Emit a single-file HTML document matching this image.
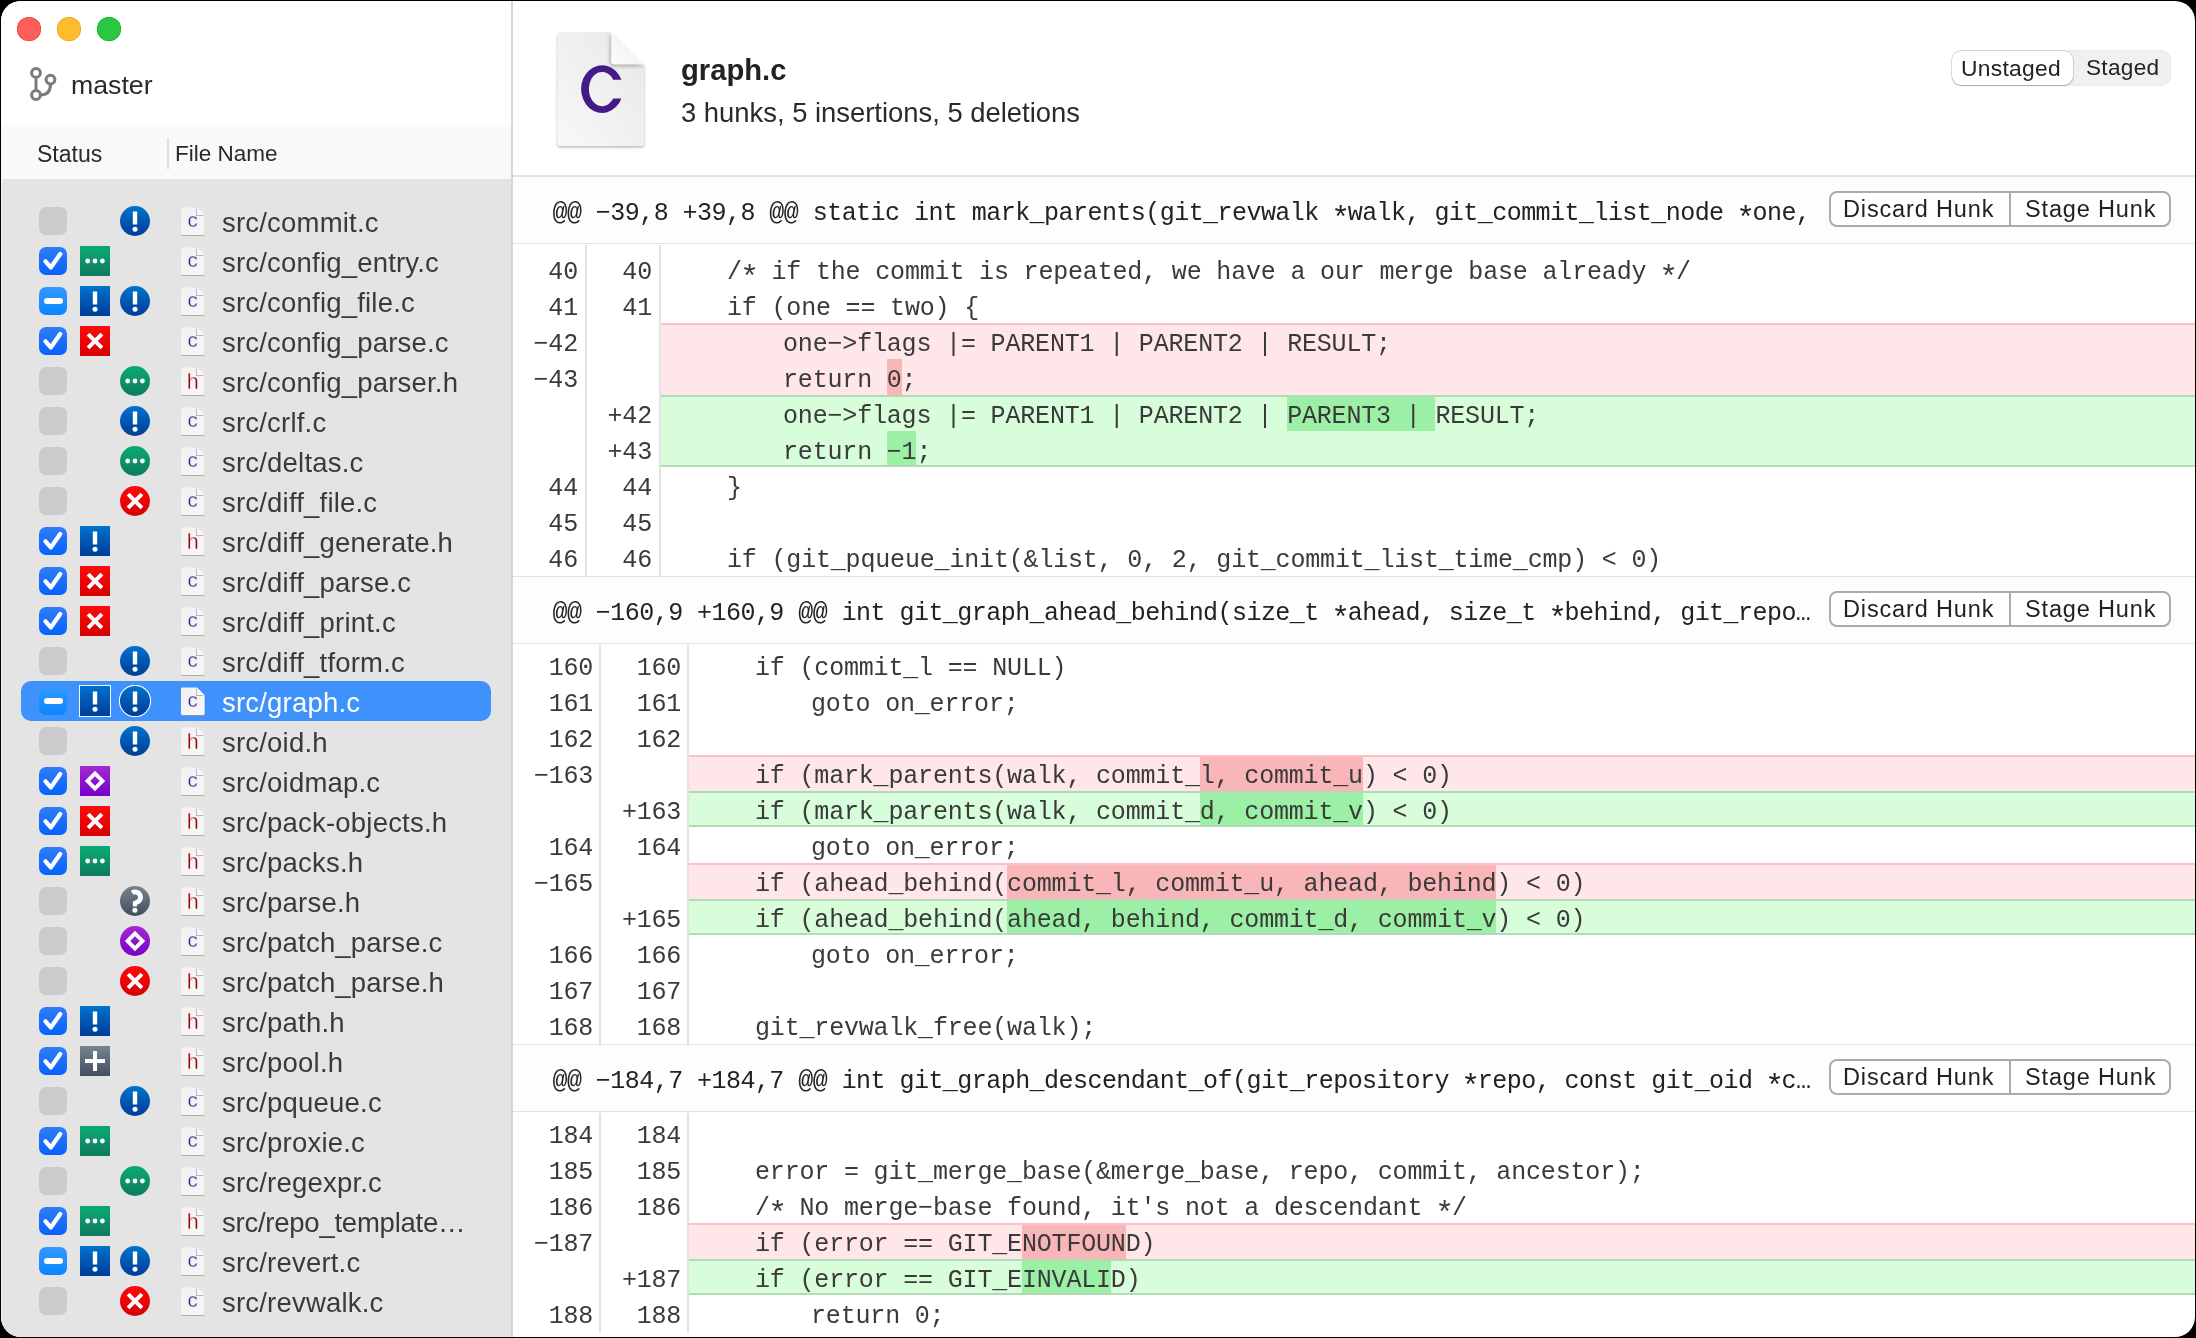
<!DOCTYPE html><html><head><meta charset="utf-8"><style>
*{box-sizing:border-box;margin:0;padding:0}
html,body{width:2196px;height:1338px;overflow:hidden;background:#000}
#win{position:absolute;left:1px;top:1px;width:2194px;height:1336px;border-radius:20px;overflow:hidden;background:#fff}
#c{position:absolute;left:-1px;top:-1px;width:2196px;height:1338px;-webkit-font-smoothing:antialiased;will-change:transform}
.a{position:absolute}
.sans{font-family:'Liberation Sans',sans-serif}
.mono{font-family:'Liberation Mono',monospace;font-size:25px;letter-spacing:-0.175px;white-space:pre;color:#3a3a3a}
.hmono{letter-spacing:-0.545px}
.ast{display:inline-block;transform:translateY(6.6px) scale(1.25)}
.tl{position:absolute;width:24px;height:24px;border-radius:50%}
.fn{position:absolute;left:222px;font-size:27.5px;letter-spacing:0.2px;color:#3a3a3a;line-height:40px;white-space:pre}
.cb{position:absolute;left:39px;width:28px;height:28px;border-radius:7px}
.cb0{background:#cbcbcb}
.cb1{background:linear-gradient(#2f7cf7,#0862fd)}
.cb2{background:linear-gradient(#3499ff,#0a84ff)}
.ic{position:absolute;width:30px;height:30px}
.fi{position:absolute;left:180px;width:26px;height:31px}
.ln{position:absolute;text-align:right;line-height:36px}
.code{position:absolute;line-height:36px}
.hl{position:absolute}
.rowdel{position:absolute;background:#ffe6e8}
.rowadd{position:absolute;background:#d8fdda}
.hh{position:absolute;left:513px;width:1683px;height:68px;background:#fdfdfd;border-top:1.5px solid #e2e2e2;border-bottom:1.5px solid #e2e2e2}
.btng{position:absolute;left:1829px;width:342px;height:36px;border:2px solid #ababab;border-radius:8px;background:#fff}
.btnt{position:absolute;font-size:23.5px;letter-spacing:0.85px;color:#222;line-height:31px;white-space:pre}
</style></head><body><div id="win"><div id="c"><svg width="0" height="0" style="position:absolute"><defs>
<filter id="blur05" x="-20%" y="-20%" width="140%" height="140%"><feGaussianBlur stdDeviation="0.6"/></filter>
<filter id="blur1" x="-20%" y="-20%" width="140%" height="140%"><feGaussianBlur stdDeviation="1.2"/></filter>
<linearGradient id="fpg" x1="0" y1="0" x2="1" y2="1"><stop offset="0" stop-color="#f1f1f1"/><stop offset="1" stop-color="#f7f7f7"/></linearGradient>
<linearGradient id="fdg" x1="0" y1="1" x2="1" y2="0"><stop offset="0" stop-color="#f4f4f4"/><stop offset="1" stop-color="#ffffff"/></linearGradient>
</defs></svg>
<div class="a" style="left:0;top:0;width:512px;height:125px;background:#fff"></div>
<div class="a" style="left:0;top:125px;width:512px;height:54px;background:#f9f9f9"></div>
<div class="a" style="left:0;top:179px;width:512px;height:1160px;background:#e4e4e4"></div>
<div class="a" style="left:1px;top:179px;width:1px;height:1160px;background:#f7f7f7"></div>
<div class="a" style="left:511px;top:0;width:2px;height:1338px;background:#d6d6d6"></div>
<div class="tl" style="left:17px;top:17px;background:#ff5f57;box-shadow:inset 0 0 0 0.8px #e2463f"></div>
<div class="tl" style="left:57px;top:17px;background:#febc2e;box-shadow:inset 0 0 0 0.8px #e1a325"></div>
<div class="tl" style="left:97px;top:17px;background:#28c840;box-shadow:inset 0 0 0 0.8px #1fad32"></div>
<svg class="a" style="left:24px;top:60px" width="40" height="48" viewBox="0 0 40 48">
<g fill="none" stroke="#7b7b7b" stroke-width="3">
<circle cx="12" cy="12.9" r="4.4"/><circle cx="12" cy="35" r="4.4"/><circle cx="26.5" cy="19.6" r="4.4"/>
<line x1="12" y1="17.3" x2="12" y2="30.6"/>
<path d="M26.5 24 C26.5 31 23.5 35 16.4 35"/>
</g></svg>
<div class="a sans" style="left:71px;top:65px;font-size:26.7px;color:#2a2a2a;line-height:40px">master</div>
<div class="a sans" style="left:37px;top:134px;font-size:23px;color:#2a2a2a;line-height:40px">Status</div>
<div class="a" style="left:167px;top:138px;width:1.5px;height:31px;background:#dcdcdc"></div>
<div class="a sans" style="left:175px;top:134px;font-size:22.5px;color:#2a2a2a;line-height:40px">File Name</div>
<div class="cb cb0" style="top:207px">
</div>
<svg class="ic" style="left:120px;top:206px" width="30" height="30" viewBox="0 0 30 30"><defs><linearGradient id="g120_206" x1="0" y1="0" x2="0" y2="1"><stop offset="0" stop-color="#0073cc"/><stop offset="1" stop-color="#003c99"/></linearGradient></defs><circle cx="15" cy="15" r="15" fill="url(#g120_206)"/><rect x="12.8" y="5.5" width="4.4" height="13" fill="#fff"/><circle cx="15" cy="23.3" r="2.5" fill="#fff"/></svg>
<svg class="fi" style="top:206px" width="26" height="31" viewBox="-1 -1 26 31"><path d="M0.6 0.5 H15.8 L23.6 8.3 V26.6 Q23.6 28 22.2 28 H1.4 Q0 28 0 26.6 V1.1 Q0 0.5 0.6 0.5Z" fill="#9a9a9a" transform="translate(0,0.9)" filter="url(#blur05)" opacity="0.75"/>
<path d="M0.6 0.5 H15.8 L23.6 8.3 V26.6 Q23.6 28 22.2 28 H1.4 Q0 28 0 26.6 V1.1 Q0 0.5 0.6 0.5Z" fill="url(#fpg)"/>
<path d="M15.8 0.5 L15.8 7.6 Q15.8 8.3 16.5 8.3 L23.6 8.3Z" fill="#888" transform="translate(-0.6,0.6)" filter="url(#blur05)" opacity="0.8"/>
<path d="M15.8 0.5 L15.8 7.6 Q15.8 8.3 16.5 8.3 L23.6 8.3Z" fill="url(#fdg)"/><text x="11.6" y="20.3" text-anchor="middle" font-family="Liberation Sans" font-size="20.5" fill="#3a1589" stroke="#f3f3f3" stroke-width="0.35">c</text></svg>
<div class="fn sans" style="top:203px;color:#3a3a3a;">src/commit.c</div>
<div class="cb cb1" style="top:247px">
<svg width="28" height="28" viewBox="0 0 28 28" style="position:absolute;left:0;top:0"><path d="M6.5 14.3 L11.8 20.4 L21.2 7.1" fill="none" stroke="#fff" stroke-width="4.3" stroke-linecap="round" stroke-linejoin="round"/></svg>
</div>
<svg class="ic" style="left:80px;top:246px" width="30" height="30" viewBox="0 0 30 30"><defs><linearGradient id="g80_246" x1="0" y1="0" x2="0" y2="1"><stop offset="0" stop-color="#0aab72"/><stop offset="1" stop-color="#0e7a5f"/></linearGradient></defs><rect x="0" y="0" width="30" height="30" fill="url(#g80_246)"/><circle cx="7.7" cy="15" r="2.4" fill="#fff"/><circle cx="15" cy="15" r="2.4" fill="#fff"/><circle cx="22.4" cy="15" r="2.4" fill="#fff"/></svg>
<svg class="fi" style="top:246px" width="26" height="31" viewBox="-1 -1 26 31"><path d="M0.6 0.5 H15.8 L23.6 8.3 V26.6 Q23.6 28 22.2 28 H1.4 Q0 28 0 26.6 V1.1 Q0 0.5 0.6 0.5Z" fill="#9a9a9a" transform="translate(0,0.9)" filter="url(#blur05)" opacity="0.75"/>
<path d="M0.6 0.5 H15.8 L23.6 8.3 V26.6 Q23.6 28 22.2 28 H1.4 Q0 28 0 26.6 V1.1 Q0 0.5 0.6 0.5Z" fill="url(#fpg)"/>
<path d="M15.8 0.5 L15.8 7.6 Q15.8 8.3 16.5 8.3 L23.6 8.3Z" fill="#888" transform="translate(-0.6,0.6)" filter="url(#blur05)" opacity="0.8"/>
<path d="M15.8 0.5 L15.8 7.6 Q15.8 8.3 16.5 8.3 L23.6 8.3Z" fill="url(#fdg)"/><text x="11.6" y="20.3" text-anchor="middle" font-family="Liberation Sans" font-size="20.5" fill="#3a1589" stroke="#f3f3f3" stroke-width="0.35">c</text></svg>
<div class="fn sans" style="top:243px;color:#3a3a3a;">src/config_entry.c</div>
<div class="cb cb2" style="top:287px">
<div style="position:absolute;left:4.5px;top:11.3px;width:19px;height:5.4px;border-radius:3px;background:#fff"></div>
</div>
<svg class="ic" style="left:80px;top:286px" width="30" height="30" viewBox="0 0 30 30"><defs><linearGradient id="g80_286" x1="0" y1="0" x2="0" y2="1"><stop offset="0" stop-color="#0073cc"/><stop offset="1" stop-color="#003c99"/></linearGradient></defs><rect x="0" y="0" width="30" height="30" fill="url(#g80_286)"/><rect x="12.8" y="5.5" width="4.4" height="13" fill="#fff"/><circle cx="15" cy="23.3" r="2.5" fill="#fff"/></svg>
<svg class="ic" style="left:120px;top:286px" width="30" height="30" viewBox="0 0 30 30"><defs><linearGradient id="g120_286" x1="0" y1="0" x2="0" y2="1"><stop offset="0" stop-color="#0073cc"/><stop offset="1" stop-color="#003c99"/></linearGradient></defs><circle cx="15" cy="15" r="15" fill="url(#g120_286)"/><rect x="12.8" y="5.5" width="4.4" height="13" fill="#fff"/><circle cx="15" cy="23.3" r="2.5" fill="#fff"/></svg>
<svg class="fi" style="top:286px" width="26" height="31" viewBox="-1 -1 26 31"><path d="M0.6 0.5 H15.8 L23.6 8.3 V26.6 Q23.6 28 22.2 28 H1.4 Q0 28 0 26.6 V1.1 Q0 0.5 0.6 0.5Z" fill="#9a9a9a" transform="translate(0,0.9)" filter="url(#blur05)" opacity="0.75"/>
<path d="M0.6 0.5 H15.8 L23.6 8.3 V26.6 Q23.6 28 22.2 28 H1.4 Q0 28 0 26.6 V1.1 Q0 0.5 0.6 0.5Z" fill="url(#fpg)"/>
<path d="M15.8 0.5 L15.8 7.6 Q15.8 8.3 16.5 8.3 L23.6 8.3Z" fill="#888" transform="translate(-0.6,0.6)" filter="url(#blur05)" opacity="0.8"/>
<path d="M15.8 0.5 L15.8 7.6 Q15.8 8.3 16.5 8.3 L23.6 8.3Z" fill="url(#fdg)"/><text x="11.6" y="20.3" text-anchor="middle" font-family="Liberation Sans" font-size="20.5" fill="#3a1589" stroke="#f3f3f3" stroke-width="0.35">c</text></svg>
<div class="fn sans" style="top:283px;color:#3a3a3a;">src/config_file.c</div>
<div class="cb cb1" style="top:327px">
<svg width="28" height="28" viewBox="0 0 28 28" style="position:absolute;left:0;top:0"><path d="M6.5 14.3 L11.8 20.4 L21.2 7.1" fill="none" stroke="#fff" stroke-width="4.3" stroke-linecap="round" stroke-linejoin="round"/></svg>
</div>
<svg class="ic" style="left:80px;top:326px" width="30" height="30" viewBox="0 0 30 30"><defs><linearGradient id="g80_326" x1="0" y1="0" x2="0" y2="1"><stop offset="0" stop-color="#ff0a0a"/><stop offset="1" stop-color="#d60000"/></linearGradient></defs><rect x="0" y="0" width="30" height="30" fill="url(#g80_326)"/><g stroke="#fff" stroke-width="4.0"><line x1="8.1" y1="8.1" x2="21.9" y2="21.9"/><line x1="21.9" y1="8.1" x2="8.1" y2="21.9"/></g></svg>
<svg class="fi" style="top:326px" width="26" height="31" viewBox="-1 -1 26 31"><path d="M0.6 0.5 H15.8 L23.6 8.3 V26.6 Q23.6 28 22.2 28 H1.4 Q0 28 0 26.6 V1.1 Q0 0.5 0.6 0.5Z" fill="#9a9a9a" transform="translate(0,0.9)" filter="url(#blur05)" opacity="0.75"/>
<path d="M0.6 0.5 H15.8 L23.6 8.3 V26.6 Q23.6 28 22.2 28 H1.4 Q0 28 0 26.6 V1.1 Q0 0.5 0.6 0.5Z" fill="url(#fpg)"/>
<path d="M15.8 0.5 L15.8 7.6 Q15.8 8.3 16.5 8.3 L23.6 8.3Z" fill="#888" transform="translate(-0.6,0.6)" filter="url(#blur05)" opacity="0.8"/>
<path d="M15.8 0.5 L15.8 7.6 Q15.8 8.3 16.5 8.3 L23.6 8.3Z" fill="url(#fdg)"/><text x="11.6" y="20.3" text-anchor="middle" font-family="Liberation Sans" font-size="20.5" fill="#3a1589" stroke="#f3f3f3" stroke-width="0.35">c</text></svg>
<div class="fn sans" style="top:323px;color:#3a3a3a;">src/config_parse.c</div>
<div class="cb cb0" style="top:367px">
</div>
<svg class="ic" style="left:120px;top:366px" width="30" height="30" viewBox="0 0 30 30"><defs><linearGradient id="g120_366" x1="0" y1="0" x2="0" y2="1"><stop offset="0" stop-color="#0aab72"/><stop offset="1" stop-color="#0e7a5f"/></linearGradient></defs><circle cx="15" cy="15" r="15" fill="url(#g120_366)"/><circle cx="7.7" cy="15" r="2.4" fill="#fff"/><circle cx="15" cy="15" r="2.4" fill="#fff"/><circle cx="22.4" cy="15" r="2.4" fill="#fff"/></svg>
<svg class="fi" style="top:366px" width="26" height="31" viewBox="-1 -1 26 31"><path d="M0.6 0.5 H15.8 L23.6 8.3 V26.6 Q23.6 28 22.2 28 H1.4 Q0 28 0 26.6 V1.1 Q0 0.5 0.6 0.5Z" fill="#9a9a9a" transform="translate(0,0.9)" filter="url(#blur05)" opacity="0.75"/>
<path d="M0.6 0.5 H15.8 L23.6 8.3 V26.6 Q23.6 28 22.2 28 H1.4 Q0 28 0 26.6 V1.1 Q0 0.5 0.6 0.5Z" fill="url(#fpg)"/>
<path d="M15.8 0.5 L15.8 7.6 Q15.8 8.3 16.5 8.3 L23.6 8.3Z" fill="#888" transform="translate(-0.6,0.6)" filter="url(#blur05)" opacity="0.8"/>
<path d="M15.8 0.5 L15.8 7.6 Q15.8 8.3 16.5 8.3 L23.6 8.3Z" fill="url(#fdg)"/><text x="11.8" y="21.8" text-anchor="middle" font-family="Liberation Sans" font-size="21.5" fill="#a0000f" stroke="#f3f3f3" stroke-width="0.3">h</text></svg>
<div class="fn sans" style="top:363px;color:#3a3a3a;">src/config_parser.h</div>
<div class="cb cb0" style="top:407px">
</div>
<svg class="ic" style="left:120px;top:406px" width="30" height="30" viewBox="0 0 30 30"><defs><linearGradient id="g120_406" x1="0" y1="0" x2="0" y2="1"><stop offset="0" stop-color="#0073cc"/><stop offset="1" stop-color="#003c99"/></linearGradient></defs><circle cx="15" cy="15" r="15" fill="url(#g120_406)"/><rect x="12.8" y="5.5" width="4.4" height="13" fill="#fff"/><circle cx="15" cy="23.3" r="2.5" fill="#fff"/></svg>
<svg class="fi" style="top:406px" width="26" height="31" viewBox="-1 -1 26 31"><path d="M0.6 0.5 H15.8 L23.6 8.3 V26.6 Q23.6 28 22.2 28 H1.4 Q0 28 0 26.6 V1.1 Q0 0.5 0.6 0.5Z" fill="#9a9a9a" transform="translate(0,0.9)" filter="url(#blur05)" opacity="0.75"/>
<path d="M0.6 0.5 H15.8 L23.6 8.3 V26.6 Q23.6 28 22.2 28 H1.4 Q0 28 0 26.6 V1.1 Q0 0.5 0.6 0.5Z" fill="url(#fpg)"/>
<path d="M15.8 0.5 L15.8 7.6 Q15.8 8.3 16.5 8.3 L23.6 8.3Z" fill="#888" transform="translate(-0.6,0.6)" filter="url(#blur05)" opacity="0.8"/>
<path d="M15.8 0.5 L15.8 7.6 Q15.8 8.3 16.5 8.3 L23.6 8.3Z" fill="url(#fdg)"/><text x="11.6" y="20.3" text-anchor="middle" font-family="Liberation Sans" font-size="20.5" fill="#3a1589" stroke="#f3f3f3" stroke-width="0.35">c</text></svg>
<div class="fn sans" style="top:403px;color:#3a3a3a;">src/crlf.c</div>
<div class="cb cb0" style="top:447px">
</div>
<svg class="ic" style="left:120px;top:446px" width="30" height="30" viewBox="0 0 30 30"><defs><linearGradient id="g120_446" x1="0" y1="0" x2="0" y2="1"><stop offset="0" stop-color="#0aab72"/><stop offset="1" stop-color="#0e7a5f"/></linearGradient></defs><circle cx="15" cy="15" r="15" fill="url(#g120_446)"/><circle cx="7.7" cy="15" r="2.4" fill="#fff"/><circle cx="15" cy="15" r="2.4" fill="#fff"/><circle cx="22.4" cy="15" r="2.4" fill="#fff"/></svg>
<svg class="fi" style="top:446px" width="26" height="31" viewBox="-1 -1 26 31"><path d="M0.6 0.5 H15.8 L23.6 8.3 V26.6 Q23.6 28 22.2 28 H1.4 Q0 28 0 26.6 V1.1 Q0 0.5 0.6 0.5Z" fill="#9a9a9a" transform="translate(0,0.9)" filter="url(#blur05)" opacity="0.75"/>
<path d="M0.6 0.5 H15.8 L23.6 8.3 V26.6 Q23.6 28 22.2 28 H1.4 Q0 28 0 26.6 V1.1 Q0 0.5 0.6 0.5Z" fill="url(#fpg)"/>
<path d="M15.8 0.5 L15.8 7.6 Q15.8 8.3 16.5 8.3 L23.6 8.3Z" fill="#888" transform="translate(-0.6,0.6)" filter="url(#blur05)" opacity="0.8"/>
<path d="M15.8 0.5 L15.8 7.6 Q15.8 8.3 16.5 8.3 L23.6 8.3Z" fill="url(#fdg)"/><text x="11.6" y="20.3" text-anchor="middle" font-family="Liberation Sans" font-size="20.5" fill="#3a1589" stroke="#f3f3f3" stroke-width="0.35">c</text></svg>
<div class="fn sans" style="top:443px;color:#3a3a3a;">src/deltas.c</div>
<div class="cb cb0" style="top:487px">
</div>
<svg class="ic" style="left:120px;top:486px" width="30" height="30" viewBox="0 0 30 30"><defs><linearGradient id="g120_486" x1="0" y1="0" x2="0" y2="1"><stop offset="0" stop-color="#ff0a0a"/><stop offset="1" stop-color="#d60000"/></linearGradient></defs><circle cx="15" cy="15" r="15" fill="url(#g120_486)"/><g stroke="#fff" stroke-width="4.0"><line x1="8.1" y1="8.1" x2="21.9" y2="21.9"/><line x1="21.9" y1="8.1" x2="8.1" y2="21.9"/></g></svg>
<svg class="fi" style="top:486px" width="26" height="31" viewBox="-1 -1 26 31"><path d="M0.6 0.5 H15.8 L23.6 8.3 V26.6 Q23.6 28 22.2 28 H1.4 Q0 28 0 26.6 V1.1 Q0 0.5 0.6 0.5Z" fill="#9a9a9a" transform="translate(0,0.9)" filter="url(#blur05)" opacity="0.75"/>
<path d="M0.6 0.5 H15.8 L23.6 8.3 V26.6 Q23.6 28 22.2 28 H1.4 Q0 28 0 26.6 V1.1 Q0 0.5 0.6 0.5Z" fill="url(#fpg)"/>
<path d="M15.8 0.5 L15.8 7.6 Q15.8 8.3 16.5 8.3 L23.6 8.3Z" fill="#888" transform="translate(-0.6,0.6)" filter="url(#blur05)" opacity="0.8"/>
<path d="M15.8 0.5 L15.8 7.6 Q15.8 8.3 16.5 8.3 L23.6 8.3Z" fill="url(#fdg)"/><text x="11.6" y="20.3" text-anchor="middle" font-family="Liberation Sans" font-size="20.5" fill="#3a1589" stroke="#f3f3f3" stroke-width="0.35">c</text></svg>
<div class="fn sans" style="top:483px;color:#3a3a3a;">src/diff_file.c</div>
<div class="cb cb1" style="top:527px">
<svg width="28" height="28" viewBox="0 0 28 28" style="position:absolute;left:0;top:0"><path d="M6.5 14.3 L11.8 20.4 L21.2 7.1" fill="none" stroke="#fff" stroke-width="4.3" stroke-linecap="round" stroke-linejoin="round"/></svg>
</div>
<svg class="ic" style="left:80px;top:526px" width="30" height="30" viewBox="0 0 30 30"><defs><linearGradient id="g80_526" x1="0" y1="0" x2="0" y2="1"><stop offset="0" stop-color="#0073cc"/><stop offset="1" stop-color="#003c99"/></linearGradient></defs><rect x="0" y="0" width="30" height="30" fill="url(#g80_526)"/><rect x="12.8" y="5.5" width="4.4" height="13" fill="#fff"/><circle cx="15" cy="23.3" r="2.5" fill="#fff"/></svg>
<svg class="fi" style="top:526px" width="26" height="31" viewBox="-1 -1 26 31"><path d="M0.6 0.5 H15.8 L23.6 8.3 V26.6 Q23.6 28 22.2 28 H1.4 Q0 28 0 26.6 V1.1 Q0 0.5 0.6 0.5Z" fill="#9a9a9a" transform="translate(0,0.9)" filter="url(#blur05)" opacity="0.75"/>
<path d="M0.6 0.5 H15.8 L23.6 8.3 V26.6 Q23.6 28 22.2 28 H1.4 Q0 28 0 26.6 V1.1 Q0 0.5 0.6 0.5Z" fill="url(#fpg)"/>
<path d="M15.8 0.5 L15.8 7.6 Q15.8 8.3 16.5 8.3 L23.6 8.3Z" fill="#888" transform="translate(-0.6,0.6)" filter="url(#blur05)" opacity="0.8"/>
<path d="M15.8 0.5 L15.8 7.6 Q15.8 8.3 16.5 8.3 L23.6 8.3Z" fill="url(#fdg)"/><text x="11.8" y="21.8" text-anchor="middle" font-family="Liberation Sans" font-size="21.5" fill="#a0000f" stroke="#f3f3f3" stroke-width="0.3">h</text></svg>
<div class="fn sans" style="top:523px;color:#3a3a3a;">src/diff_generate.h</div>
<div class="cb cb1" style="top:567px">
<svg width="28" height="28" viewBox="0 0 28 28" style="position:absolute;left:0;top:0"><path d="M6.5 14.3 L11.8 20.4 L21.2 7.1" fill="none" stroke="#fff" stroke-width="4.3" stroke-linecap="round" stroke-linejoin="round"/></svg>
</div>
<svg class="ic" style="left:80px;top:566px" width="30" height="30" viewBox="0 0 30 30"><defs><linearGradient id="g80_566" x1="0" y1="0" x2="0" y2="1"><stop offset="0" stop-color="#ff0a0a"/><stop offset="1" stop-color="#d60000"/></linearGradient></defs><rect x="0" y="0" width="30" height="30" fill="url(#g80_566)"/><g stroke="#fff" stroke-width="4.0"><line x1="8.1" y1="8.1" x2="21.9" y2="21.9"/><line x1="21.9" y1="8.1" x2="8.1" y2="21.9"/></g></svg>
<svg class="fi" style="top:566px" width="26" height="31" viewBox="-1 -1 26 31"><path d="M0.6 0.5 H15.8 L23.6 8.3 V26.6 Q23.6 28 22.2 28 H1.4 Q0 28 0 26.6 V1.1 Q0 0.5 0.6 0.5Z" fill="#9a9a9a" transform="translate(0,0.9)" filter="url(#blur05)" opacity="0.75"/>
<path d="M0.6 0.5 H15.8 L23.6 8.3 V26.6 Q23.6 28 22.2 28 H1.4 Q0 28 0 26.6 V1.1 Q0 0.5 0.6 0.5Z" fill="url(#fpg)"/>
<path d="M15.8 0.5 L15.8 7.6 Q15.8 8.3 16.5 8.3 L23.6 8.3Z" fill="#888" transform="translate(-0.6,0.6)" filter="url(#blur05)" opacity="0.8"/>
<path d="M15.8 0.5 L15.8 7.6 Q15.8 8.3 16.5 8.3 L23.6 8.3Z" fill="url(#fdg)"/><text x="11.6" y="20.3" text-anchor="middle" font-family="Liberation Sans" font-size="20.5" fill="#3a1589" stroke="#f3f3f3" stroke-width="0.35">c</text></svg>
<div class="fn sans" style="top:563px;color:#3a3a3a;">src/diff_parse.c</div>
<div class="cb cb1" style="top:607px">
<svg width="28" height="28" viewBox="0 0 28 28" style="position:absolute;left:0;top:0"><path d="M6.5 14.3 L11.8 20.4 L21.2 7.1" fill="none" stroke="#fff" stroke-width="4.3" stroke-linecap="round" stroke-linejoin="round"/></svg>
</div>
<svg class="ic" style="left:80px;top:606px" width="30" height="30" viewBox="0 0 30 30"><defs><linearGradient id="g80_606" x1="0" y1="0" x2="0" y2="1"><stop offset="0" stop-color="#ff0a0a"/><stop offset="1" stop-color="#d60000"/></linearGradient></defs><rect x="0" y="0" width="30" height="30" fill="url(#g80_606)"/><g stroke="#fff" stroke-width="4.0"><line x1="8.1" y1="8.1" x2="21.9" y2="21.9"/><line x1="21.9" y1="8.1" x2="8.1" y2="21.9"/></g></svg>
<svg class="fi" style="top:606px" width="26" height="31" viewBox="-1 -1 26 31"><path d="M0.6 0.5 H15.8 L23.6 8.3 V26.6 Q23.6 28 22.2 28 H1.4 Q0 28 0 26.6 V1.1 Q0 0.5 0.6 0.5Z" fill="#9a9a9a" transform="translate(0,0.9)" filter="url(#blur05)" opacity="0.75"/>
<path d="M0.6 0.5 H15.8 L23.6 8.3 V26.6 Q23.6 28 22.2 28 H1.4 Q0 28 0 26.6 V1.1 Q0 0.5 0.6 0.5Z" fill="url(#fpg)"/>
<path d="M15.8 0.5 L15.8 7.6 Q15.8 8.3 16.5 8.3 L23.6 8.3Z" fill="#888" transform="translate(-0.6,0.6)" filter="url(#blur05)" opacity="0.8"/>
<path d="M15.8 0.5 L15.8 7.6 Q15.8 8.3 16.5 8.3 L23.6 8.3Z" fill="url(#fdg)"/><text x="11.6" y="20.3" text-anchor="middle" font-family="Liberation Sans" font-size="20.5" fill="#3a1589" stroke="#f3f3f3" stroke-width="0.35">c</text></svg>
<div class="fn sans" style="top:603px;color:#3a3a3a;">src/diff_print.c</div>
<div class="cb cb0" style="top:647px">
</div>
<svg class="ic" style="left:120px;top:646px" width="30" height="30" viewBox="0 0 30 30"><defs><linearGradient id="g120_646" x1="0" y1="0" x2="0" y2="1"><stop offset="0" stop-color="#0073cc"/><stop offset="1" stop-color="#003c99"/></linearGradient></defs><circle cx="15" cy="15" r="15" fill="url(#g120_646)"/><rect x="12.8" y="5.5" width="4.4" height="13" fill="#fff"/><circle cx="15" cy="23.3" r="2.5" fill="#fff"/></svg>
<svg class="fi" style="top:646px" width="26" height="31" viewBox="-1 -1 26 31"><path d="M0.6 0.5 H15.8 L23.6 8.3 V26.6 Q23.6 28 22.2 28 H1.4 Q0 28 0 26.6 V1.1 Q0 0.5 0.6 0.5Z" fill="#9a9a9a" transform="translate(0,0.9)" filter="url(#blur05)" opacity="0.75"/>
<path d="M0.6 0.5 H15.8 L23.6 8.3 V26.6 Q23.6 28 22.2 28 H1.4 Q0 28 0 26.6 V1.1 Q0 0.5 0.6 0.5Z" fill="url(#fpg)"/>
<path d="M15.8 0.5 L15.8 7.6 Q15.8 8.3 16.5 8.3 L23.6 8.3Z" fill="#888" transform="translate(-0.6,0.6)" filter="url(#blur05)" opacity="0.8"/>
<path d="M15.8 0.5 L15.8 7.6 Q15.8 8.3 16.5 8.3 L23.6 8.3Z" fill="url(#fdg)"/><text x="11.6" y="20.3" text-anchor="middle" font-family="Liberation Sans" font-size="20.5" fill="#3a1589" stroke="#f3f3f3" stroke-width="0.35">c</text></svg>
<div class="fn sans" style="top:643px;color:#3a3a3a;">src/diff_tform.c</div>
<div class="a" style="left:21px;top:681px;width:470px;height:40px;border-radius:10px;background:#3f91fc"></div>
<div class="cb cb2" style="top:687px">
<div style="position:absolute;left:4.5px;top:11.3px;width:19px;height:5.4px;border-radius:3px;background:#fff"></div>
</div>
<svg class="ic" style="left:79px;top:685px;width:32px;height:32px" width="32" height="32" viewBox="-1 -1 32 32"><defs><linearGradient id="g80_686" x1="0" y1="0" x2="0" y2="1"><stop offset="0" stop-color="#0073cc"/><stop offset="1" stop-color="#003c99"/></linearGradient></defs><rect x="-0.6" y="-0.6" width="31.2" height="31.2" fill="url(#g80_686)" stroke="#fff" stroke-width="1.1"/><rect x="12.8" y="5.5" width="4.4" height="13" fill="#fff"/><circle cx="15" cy="23.3" r="2.5" fill="#fff"/></svg>
<svg class="ic" style="left:119px;top:685px;width:32px;height:32px" width="32" height="32" viewBox="-1 -1 32 32"><defs><linearGradient id="g120_686" x1="0" y1="0" x2="0" y2="1"><stop offset="0" stop-color="#0073cc"/><stop offset="1" stop-color="#003c99"/></linearGradient></defs><circle cx="15" cy="15" r="15.6" fill="url(#g120_686)" stroke="#fff" stroke-width="1.1"/><rect x="12.8" y="5.5" width="4.4" height="13" fill="#fff"/><circle cx="15" cy="23.3" r="2.5" fill="#fff"/></svg>
<svg class="fi" style="top:686px" width="26" height="31" viewBox="-1 -1 26 31"><path d="M0.6 0.5 H15.8 L23.6 8.3 V26.6 Q23.6 28 22.2 28 H1.4 Q0 28 0 26.6 V1.1 Q0 0.5 0.6 0.5Z" fill="#9a9a9a" transform="translate(0,0.9)" filter="url(#blur05)" opacity="0.75"/>
<path d="M0.6 0.5 H15.8 L23.6 8.3 V26.6 Q23.6 28 22.2 28 H1.4 Q0 28 0 26.6 V1.1 Q0 0.5 0.6 0.5Z" fill="url(#fpg)"/>
<path d="M15.8 0.5 L15.8 7.6 Q15.8 8.3 16.5 8.3 L23.6 8.3Z" fill="#888" transform="translate(-0.6,0.6)" filter="url(#blur05)" opacity="0.8"/>
<path d="M15.8 0.5 L15.8 7.6 Q15.8 8.3 16.5 8.3 L23.6 8.3Z" fill="url(#fdg)"/><text x="11.6" y="20.3" text-anchor="middle" font-family="Liberation Sans" font-size="20.5" fill="#3a1589" stroke="#f3f3f3" stroke-width="0.35">c</text></svg>
<div class="fn sans" style="top:683px;color:#fff;">src/graph.c</div>
<div class="cb cb0" style="top:727px">
</div>
<svg class="ic" style="left:120px;top:726px" width="30" height="30" viewBox="0 0 30 30"><defs><linearGradient id="g120_726" x1="0" y1="0" x2="0" y2="1"><stop offset="0" stop-color="#0073cc"/><stop offset="1" stop-color="#003c99"/></linearGradient></defs><circle cx="15" cy="15" r="15" fill="url(#g120_726)"/><rect x="12.8" y="5.5" width="4.4" height="13" fill="#fff"/><circle cx="15" cy="23.3" r="2.5" fill="#fff"/></svg>
<svg class="fi" style="top:726px" width="26" height="31" viewBox="-1 -1 26 31"><path d="M0.6 0.5 H15.8 L23.6 8.3 V26.6 Q23.6 28 22.2 28 H1.4 Q0 28 0 26.6 V1.1 Q0 0.5 0.6 0.5Z" fill="#9a9a9a" transform="translate(0,0.9)" filter="url(#blur05)" opacity="0.75"/>
<path d="M0.6 0.5 H15.8 L23.6 8.3 V26.6 Q23.6 28 22.2 28 H1.4 Q0 28 0 26.6 V1.1 Q0 0.5 0.6 0.5Z" fill="url(#fpg)"/>
<path d="M15.8 0.5 L15.8 7.6 Q15.8 8.3 16.5 8.3 L23.6 8.3Z" fill="#888" transform="translate(-0.6,0.6)" filter="url(#blur05)" opacity="0.8"/>
<path d="M15.8 0.5 L15.8 7.6 Q15.8 8.3 16.5 8.3 L23.6 8.3Z" fill="url(#fdg)"/><text x="11.8" y="21.8" text-anchor="middle" font-family="Liberation Sans" font-size="21.5" fill="#a0000f" stroke="#f3f3f3" stroke-width="0.3">h</text></svg>
<div class="fn sans" style="top:723px;color:#3a3a3a;">src/oid.h</div>
<div class="cb cb1" style="top:767px">
<svg width="28" height="28" viewBox="0 0 28 28" style="position:absolute;left:0;top:0"><path d="M6.5 14.3 L11.8 20.4 L21.2 7.1" fill="none" stroke="#fff" stroke-width="4.3" stroke-linecap="round" stroke-linejoin="round"/></svg>
</div>
<svg class="ic" style="left:80px;top:766px" width="30" height="30" viewBox="0 0 30 30"><defs><linearGradient id="g80_766" x1="0" y1="0" x2="0" y2="1"><stop offset="0" stop-color="#a22ad3"/><stop offset="1" stop-color="#7600c8"/></linearGradient></defs><rect x="0" y="0" width="30" height="30" fill="url(#g80_766)"/><path fill="#fff" fill-rule="evenodd" d="M15 4.8 L25.2 15 L15 25.2 L4.8 15 Z M15 10.2 L10.2 15 L15 19.8 L19.8 15 Z"/></svg>
<svg class="fi" style="top:766px" width="26" height="31" viewBox="-1 -1 26 31"><path d="M0.6 0.5 H15.8 L23.6 8.3 V26.6 Q23.6 28 22.2 28 H1.4 Q0 28 0 26.6 V1.1 Q0 0.5 0.6 0.5Z" fill="#9a9a9a" transform="translate(0,0.9)" filter="url(#blur05)" opacity="0.75"/>
<path d="M0.6 0.5 H15.8 L23.6 8.3 V26.6 Q23.6 28 22.2 28 H1.4 Q0 28 0 26.6 V1.1 Q0 0.5 0.6 0.5Z" fill="url(#fpg)"/>
<path d="M15.8 0.5 L15.8 7.6 Q15.8 8.3 16.5 8.3 L23.6 8.3Z" fill="#888" transform="translate(-0.6,0.6)" filter="url(#blur05)" opacity="0.8"/>
<path d="M15.8 0.5 L15.8 7.6 Q15.8 8.3 16.5 8.3 L23.6 8.3Z" fill="url(#fdg)"/><text x="11.6" y="20.3" text-anchor="middle" font-family="Liberation Sans" font-size="20.5" fill="#3a1589" stroke="#f3f3f3" stroke-width="0.35">c</text></svg>
<div class="fn sans" style="top:763px;color:#3a3a3a;">src/oidmap.c</div>
<div class="cb cb1" style="top:807px">
<svg width="28" height="28" viewBox="0 0 28 28" style="position:absolute;left:0;top:0"><path d="M6.5 14.3 L11.8 20.4 L21.2 7.1" fill="none" stroke="#fff" stroke-width="4.3" stroke-linecap="round" stroke-linejoin="round"/></svg>
</div>
<svg class="ic" style="left:80px;top:806px" width="30" height="30" viewBox="0 0 30 30"><defs><linearGradient id="g80_806" x1="0" y1="0" x2="0" y2="1"><stop offset="0" stop-color="#ff0a0a"/><stop offset="1" stop-color="#d60000"/></linearGradient></defs><rect x="0" y="0" width="30" height="30" fill="url(#g80_806)"/><g stroke="#fff" stroke-width="4.0"><line x1="8.1" y1="8.1" x2="21.9" y2="21.9"/><line x1="21.9" y1="8.1" x2="8.1" y2="21.9"/></g></svg>
<svg class="fi" style="top:806px" width="26" height="31" viewBox="-1 -1 26 31"><path d="M0.6 0.5 H15.8 L23.6 8.3 V26.6 Q23.6 28 22.2 28 H1.4 Q0 28 0 26.6 V1.1 Q0 0.5 0.6 0.5Z" fill="#9a9a9a" transform="translate(0,0.9)" filter="url(#blur05)" opacity="0.75"/>
<path d="M0.6 0.5 H15.8 L23.6 8.3 V26.6 Q23.6 28 22.2 28 H1.4 Q0 28 0 26.6 V1.1 Q0 0.5 0.6 0.5Z" fill="url(#fpg)"/>
<path d="M15.8 0.5 L15.8 7.6 Q15.8 8.3 16.5 8.3 L23.6 8.3Z" fill="#888" transform="translate(-0.6,0.6)" filter="url(#blur05)" opacity="0.8"/>
<path d="M15.8 0.5 L15.8 7.6 Q15.8 8.3 16.5 8.3 L23.6 8.3Z" fill="url(#fdg)"/><text x="11.8" y="21.8" text-anchor="middle" font-family="Liberation Sans" font-size="21.5" fill="#a0000f" stroke="#f3f3f3" stroke-width="0.3">h</text></svg>
<div class="fn sans" style="top:803px;color:#3a3a3a;">src/pack-objects.h</div>
<div class="cb cb1" style="top:847px">
<svg width="28" height="28" viewBox="0 0 28 28" style="position:absolute;left:0;top:0"><path d="M6.5 14.3 L11.8 20.4 L21.2 7.1" fill="none" stroke="#fff" stroke-width="4.3" stroke-linecap="round" stroke-linejoin="round"/></svg>
</div>
<svg class="ic" style="left:80px;top:846px" width="30" height="30" viewBox="0 0 30 30"><defs><linearGradient id="g80_846" x1="0" y1="0" x2="0" y2="1"><stop offset="0" stop-color="#0aab72"/><stop offset="1" stop-color="#0e7a5f"/></linearGradient></defs><rect x="0" y="0" width="30" height="30" fill="url(#g80_846)"/><circle cx="7.7" cy="15" r="2.4" fill="#fff"/><circle cx="15" cy="15" r="2.4" fill="#fff"/><circle cx="22.4" cy="15" r="2.4" fill="#fff"/></svg>
<svg class="fi" style="top:846px" width="26" height="31" viewBox="-1 -1 26 31"><path d="M0.6 0.5 H15.8 L23.6 8.3 V26.6 Q23.6 28 22.2 28 H1.4 Q0 28 0 26.6 V1.1 Q0 0.5 0.6 0.5Z" fill="#9a9a9a" transform="translate(0,0.9)" filter="url(#blur05)" opacity="0.75"/>
<path d="M0.6 0.5 H15.8 L23.6 8.3 V26.6 Q23.6 28 22.2 28 H1.4 Q0 28 0 26.6 V1.1 Q0 0.5 0.6 0.5Z" fill="url(#fpg)"/>
<path d="M15.8 0.5 L15.8 7.6 Q15.8 8.3 16.5 8.3 L23.6 8.3Z" fill="#888" transform="translate(-0.6,0.6)" filter="url(#blur05)" opacity="0.8"/>
<path d="M15.8 0.5 L15.8 7.6 Q15.8 8.3 16.5 8.3 L23.6 8.3Z" fill="url(#fdg)"/><text x="11.8" y="21.8" text-anchor="middle" font-family="Liberation Sans" font-size="21.5" fill="#a0000f" stroke="#f3f3f3" stroke-width="0.3">h</text></svg>
<div class="fn sans" style="top:843px;color:#3a3a3a;">src/packs.h</div>
<div class="cb cb0" style="top:887px">
</div>
<svg class="ic" style="left:120px;top:886px" width="30" height="30" viewBox="0 0 30 30"><defs><linearGradient id="g120_886" x1="0" y1="0" x2="0" y2="1"><stop offset="0" stop-color="#76858f"/><stop offset="1" stop-color="#434d5e"/></linearGradient></defs><circle cx="15" cy="15" r="15" fill="url(#g120_886)"/><path d="M12.16 6.86 A5.3 5.3 0 1 1 15.2 16.5" fill="none" stroke="#fff" stroke-width="4.8"/><rect x="12.9" y="15.2" width="4" height="5.3" fill="#fff"/><circle cx="14.9" cy="24.3" r="2.5" fill="#fff"/></svg>
<svg class="fi" style="top:886px" width="26" height="31" viewBox="-1 -1 26 31"><path d="M0.6 0.5 H15.8 L23.6 8.3 V26.6 Q23.6 28 22.2 28 H1.4 Q0 28 0 26.6 V1.1 Q0 0.5 0.6 0.5Z" fill="#9a9a9a" transform="translate(0,0.9)" filter="url(#blur05)" opacity="0.75"/>
<path d="M0.6 0.5 H15.8 L23.6 8.3 V26.6 Q23.6 28 22.2 28 H1.4 Q0 28 0 26.6 V1.1 Q0 0.5 0.6 0.5Z" fill="url(#fpg)"/>
<path d="M15.8 0.5 L15.8 7.6 Q15.8 8.3 16.5 8.3 L23.6 8.3Z" fill="#888" transform="translate(-0.6,0.6)" filter="url(#blur05)" opacity="0.8"/>
<path d="M15.8 0.5 L15.8 7.6 Q15.8 8.3 16.5 8.3 L23.6 8.3Z" fill="url(#fdg)"/><text x="11.8" y="21.8" text-anchor="middle" font-family="Liberation Sans" font-size="21.5" fill="#a0000f" stroke="#f3f3f3" stroke-width="0.3">h</text></svg>
<div class="fn sans" style="top:883px;color:#3a3a3a;">src/parse.h</div>
<div class="cb cb0" style="top:927px">
</div>
<svg class="ic" style="left:120px;top:926px" width="30" height="30" viewBox="0 0 30 30"><defs><linearGradient id="g120_926" x1="0" y1="0" x2="0" y2="1"><stop offset="0" stop-color="#a22ad3"/><stop offset="1" stop-color="#7600c8"/></linearGradient></defs><circle cx="15" cy="15" r="15" fill="url(#g120_926)"/><path fill="#fff" fill-rule="evenodd" d="M15 4.8 L25.2 15 L15 25.2 L4.8 15 Z M15 10.2 L10.2 15 L15 19.8 L19.8 15 Z"/></svg>
<svg class="fi" style="top:926px" width="26" height="31" viewBox="-1 -1 26 31"><path d="M0.6 0.5 H15.8 L23.6 8.3 V26.6 Q23.6 28 22.2 28 H1.4 Q0 28 0 26.6 V1.1 Q0 0.5 0.6 0.5Z" fill="#9a9a9a" transform="translate(0,0.9)" filter="url(#blur05)" opacity="0.75"/>
<path d="M0.6 0.5 H15.8 L23.6 8.3 V26.6 Q23.6 28 22.2 28 H1.4 Q0 28 0 26.6 V1.1 Q0 0.5 0.6 0.5Z" fill="url(#fpg)"/>
<path d="M15.8 0.5 L15.8 7.6 Q15.8 8.3 16.5 8.3 L23.6 8.3Z" fill="#888" transform="translate(-0.6,0.6)" filter="url(#blur05)" opacity="0.8"/>
<path d="M15.8 0.5 L15.8 7.6 Q15.8 8.3 16.5 8.3 L23.6 8.3Z" fill="url(#fdg)"/><text x="11.6" y="20.3" text-anchor="middle" font-family="Liberation Sans" font-size="20.5" fill="#3a1589" stroke="#f3f3f3" stroke-width="0.35">c</text></svg>
<div class="fn sans" style="top:923px;color:#3a3a3a;">src/patch_parse.c</div>
<div class="cb cb0" style="top:967px">
</div>
<svg class="ic" style="left:120px;top:966px" width="30" height="30" viewBox="0 0 30 30"><defs><linearGradient id="g120_966" x1="0" y1="0" x2="0" y2="1"><stop offset="0" stop-color="#ff0a0a"/><stop offset="1" stop-color="#d60000"/></linearGradient></defs><circle cx="15" cy="15" r="15" fill="url(#g120_966)"/><g stroke="#fff" stroke-width="4.0"><line x1="8.1" y1="8.1" x2="21.9" y2="21.9"/><line x1="21.9" y1="8.1" x2="8.1" y2="21.9"/></g></svg>
<svg class="fi" style="top:966px" width="26" height="31" viewBox="-1 -1 26 31"><path d="M0.6 0.5 H15.8 L23.6 8.3 V26.6 Q23.6 28 22.2 28 H1.4 Q0 28 0 26.6 V1.1 Q0 0.5 0.6 0.5Z" fill="#9a9a9a" transform="translate(0,0.9)" filter="url(#blur05)" opacity="0.75"/>
<path d="M0.6 0.5 H15.8 L23.6 8.3 V26.6 Q23.6 28 22.2 28 H1.4 Q0 28 0 26.6 V1.1 Q0 0.5 0.6 0.5Z" fill="url(#fpg)"/>
<path d="M15.8 0.5 L15.8 7.6 Q15.8 8.3 16.5 8.3 L23.6 8.3Z" fill="#888" transform="translate(-0.6,0.6)" filter="url(#blur05)" opacity="0.8"/>
<path d="M15.8 0.5 L15.8 7.6 Q15.8 8.3 16.5 8.3 L23.6 8.3Z" fill="url(#fdg)"/><text x="11.8" y="21.8" text-anchor="middle" font-family="Liberation Sans" font-size="21.5" fill="#a0000f" stroke="#f3f3f3" stroke-width="0.3">h</text></svg>
<div class="fn sans" style="top:963px;color:#3a3a3a;">src/patch_parse.h</div>
<div class="cb cb1" style="top:1007px">
<svg width="28" height="28" viewBox="0 0 28 28" style="position:absolute;left:0;top:0"><path d="M6.5 14.3 L11.8 20.4 L21.2 7.1" fill="none" stroke="#fff" stroke-width="4.3" stroke-linecap="round" stroke-linejoin="round"/></svg>
</div>
<svg class="ic" style="left:80px;top:1006px" width="30" height="30" viewBox="0 0 30 30"><defs><linearGradient id="g80_1006" x1="0" y1="0" x2="0" y2="1"><stop offset="0" stop-color="#0073cc"/><stop offset="1" stop-color="#003c99"/></linearGradient></defs><rect x="0" y="0" width="30" height="30" fill="url(#g80_1006)"/><rect x="12.8" y="5.5" width="4.4" height="13" fill="#fff"/><circle cx="15" cy="23.3" r="2.5" fill="#fff"/></svg>
<svg class="fi" style="top:1006px" width="26" height="31" viewBox="-1 -1 26 31"><path d="M0.6 0.5 H15.8 L23.6 8.3 V26.6 Q23.6 28 22.2 28 H1.4 Q0 28 0 26.6 V1.1 Q0 0.5 0.6 0.5Z" fill="#9a9a9a" transform="translate(0,0.9)" filter="url(#blur05)" opacity="0.75"/>
<path d="M0.6 0.5 H15.8 L23.6 8.3 V26.6 Q23.6 28 22.2 28 H1.4 Q0 28 0 26.6 V1.1 Q0 0.5 0.6 0.5Z" fill="url(#fpg)"/>
<path d="M15.8 0.5 L15.8 7.6 Q15.8 8.3 16.5 8.3 L23.6 8.3Z" fill="#888" transform="translate(-0.6,0.6)" filter="url(#blur05)" opacity="0.8"/>
<path d="M15.8 0.5 L15.8 7.6 Q15.8 8.3 16.5 8.3 L23.6 8.3Z" fill="url(#fdg)"/><text x="11.8" y="21.8" text-anchor="middle" font-family="Liberation Sans" font-size="21.5" fill="#a0000f" stroke="#f3f3f3" stroke-width="0.3">h</text></svg>
<div class="fn sans" style="top:1003px;color:#3a3a3a;">src/path.h</div>
<div class="cb cb1" style="top:1047px">
<svg width="28" height="28" viewBox="0 0 28 28" style="position:absolute;left:0;top:0"><path d="M6.5 14.3 L11.8 20.4 L21.2 7.1" fill="none" stroke="#fff" stroke-width="4.3" stroke-linecap="round" stroke-linejoin="round"/></svg>
</div>
<svg class="ic" style="left:80px;top:1046px" width="30" height="30" viewBox="0 0 30 30"><defs><linearGradient id="g80_1046" x1="0" y1="0" x2="0" y2="1"><stop offset="0" stop-color="#76858f"/><stop offset="1" stop-color="#434d5e"/></linearGradient></defs><rect x="0" y="0" width="30" height="30" fill="url(#g80_1046)"/><g fill="#fff"><rect x="5" y="13" width="20" height="4"/><rect x="13" y="5" width="4" height="20"/></g></svg>
<svg class="fi" style="top:1046px" width="26" height="31" viewBox="-1 -1 26 31"><path d="M0.6 0.5 H15.8 L23.6 8.3 V26.6 Q23.6 28 22.2 28 H1.4 Q0 28 0 26.6 V1.1 Q0 0.5 0.6 0.5Z" fill="#9a9a9a" transform="translate(0,0.9)" filter="url(#blur05)" opacity="0.75"/>
<path d="M0.6 0.5 H15.8 L23.6 8.3 V26.6 Q23.6 28 22.2 28 H1.4 Q0 28 0 26.6 V1.1 Q0 0.5 0.6 0.5Z" fill="url(#fpg)"/>
<path d="M15.8 0.5 L15.8 7.6 Q15.8 8.3 16.5 8.3 L23.6 8.3Z" fill="#888" transform="translate(-0.6,0.6)" filter="url(#blur05)" opacity="0.8"/>
<path d="M15.8 0.5 L15.8 7.6 Q15.8 8.3 16.5 8.3 L23.6 8.3Z" fill="url(#fdg)"/><text x="11.8" y="21.8" text-anchor="middle" font-family="Liberation Sans" font-size="21.5" fill="#a0000f" stroke="#f3f3f3" stroke-width="0.3">h</text></svg>
<div class="fn sans" style="top:1043px;color:#3a3a3a;">src/pool.h</div>
<div class="cb cb0" style="top:1087px">
</div>
<svg class="ic" style="left:120px;top:1086px" width="30" height="30" viewBox="0 0 30 30"><defs><linearGradient id="g120_1086" x1="0" y1="0" x2="0" y2="1"><stop offset="0" stop-color="#0073cc"/><stop offset="1" stop-color="#003c99"/></linearGradient></defs><circle cx="15" cy="15" r="15" fill="url(#g120_1086)"/><rect x="12.8" y="5.5" width="4.4" height="13" fill="#fff"/><circle cx="15" cy="23.3" r="2.5" fill="#fff"/></svg>
<svg class="fi" style="top:1086px" width="26" height="31" viewBox="-1 -1 26 31"><path d="M0.6 0.5 H15.8 L23.6 8.3 V26.6 Q23.6 28 22.2 28 H1.4 Q0 28 0 26.6 V1.1 Q0 0.5 0.6 0.5Z" fill="#9a9a9a" transform="translate(0,0.9)" filter="url(#blur05)" opacity="0.75"/>
<path d="M0.6 0.5 H15.8 L23.6 8.3 V26.6 Q23.6 28 22.2 28 H1.4 Q0 28 0 26.6 V1.1 Q0 0.5 0.6 0.5Z" fill="url(#fpg)"/>
<path d="M15.8 0.5 L15.8 7.6 Q15.8 8.3 16.5 8.3 L23.6 8.3Z" fill="#888" transform="translate(-0.6,0.6)" filter="url(#blur05)" opacity="0.8"/>
<path d="M15.8 0.5 L15.8 7.6 Q15.8 8.3 16.5 8.3 L23.6 8.3Z" fill="url(#fdg)"/><text x="11.6" y="20.3" text-anchor="middle" font-family="Liberation Sans" font-size="20.5" fill="#3a1589" stroke="#f3f3f3" stroke-width="0.35">c</text></svg>
<div class="fn sans" style="top:1083px;color:#3a3a3a;">src/pqueue.c</div>
<div class="cb cb1" style="top:1127px">
<svg width="28" height="28" viewBox="0 0 28 28" style="position:absolute;left:0;top:0"><path d="M6.5 14.3 L11.8 20.4 L21.2 7.1" fill="none" stroke="#fff" stroke-width="4.3" stroke-linecap="round" stroke-linejoin="round"/></svg>
</div>
<svg class="ic" style="left:80px;top:1126px" width="30" height="30" viewBox="0 0 30 30"><defs><linearGradient id="g80_1126" x1="0" y1="0" x2="0" y2="1"><stop offset="0" stop-color="#0aab72"/><stop offset="1" stop-color="#0e7a5f"/></linearGradient></defs><rect x="0" y="0" width="30" height="30" fill="url(#g80_1126)"/><circle cx="7.7" cy="15" r="2.4" fill="#fff"/><circle cx="15" cy="15" r="2.4" fill="#fff"/><circle cx="22.4" cy="15" r="2.4" fill="#fff"/></svg>
<svg class="fi" style="top:1126px" width="26" height="31" viewBox="-1 -1 26 31"><path d="M0.6 0.5 H15.8 L23.6 8.3 V26.6 Q23.6 28 22.2 28 H1.4 Q0 28 0 26.6 V1.1 Q0 0.5 0.6 0.5Z" fill="#9a9a9a" transform="translate(0,0.9)" filter="url(#blur05)" opacity="0.75"/>
<path d="M0.6 0.5 H15.8 L23.6 8.3 V26.6 Q23.6 28 22.2 28 H1.4 Q0 28 0 26.6 V1.1 Q0 0.5 0.6 0.5Z" fill="url(#fpg)"/>
<path d="M15.8 0.5 L15.8 7.6 Q15.8 8.3 16.5 8.3 L23.6 8.3Z" fill="#888" transform="translate(-0.6,0.6)" filter="url(#blur05)" opacity="0.8"/>
<path d="M15.8 0.5 L15.8 7.6 Q15.8 8.3 16.5 8.3 L23.6 8.3Z" fill="url(#fdg)"/><text x="11.6" y="20.3" text-anchor="middle" font-family="Liberation Sans" font-size="20.5" fill="#3a1589" stroke="#f3f3f3" stroke-width="0.35">c</text></svg>
<div class="fn sans" style="top:1123px;color:#3a3a3a;">src/proxie.c</div>
<div class="cb cb0" style="top:1167px">
</div>
<svg class="ic" style="left:120px;top:1166px" width="30" height="30" viewBox="0 0 30 30"><defs><linearGradient id="g120_1166" x1="0" y1="0" x2="0" y2="1"><stop offset="0" stop-color="#0aab72"/><stop offset="1" stop-color="#0e7a5f"/></linearGradient></defs><circle cx="15" cy="15" r="15" fill="url(#g120_1166)"/><circle cx="7.7" cy="15" r="2.4" fill="#fff"/><circle cx="15" cy="15" r="2.4" fill="#fff"/><circle cx="22.4" cy="15" r="2.4" fill="#fff"/></svg>
<svg class="fi" style="top:1166px" width="26" height="31" viewBox="-1 -1 26 31"><path d="M0.6 0.5 H15.8 L23.6 8.3 V26.6 Q23.6 28 22.2 28 H1.4 Q0 28 0 26.6 V1.1 Q0 0.5 0.6 0.5Z" fill="#9a9a9a" transform="translate(0,0.9)" filter="url(#blur05)" opacity="0.75"/>
<path d="M0.6 0.5 H15.8 L23.6 8.3 V26.6 Q23.6 28 22.2 28 H1.4 Q0 28 0 26.6 V1.1 Q0 0.5 0.6 0.5Z" fill="url(#fpg)"/>
<path d="M15.8 0.5 L15.8 7.6 Q15.8 8.3 16.5 8.3 L23.6 8.3Z" fill="#888" transform="translate(-0.6,0.6)" filter="url(#blur05)" opacity="0.8"/>
<path d="M15.8 0.5 L15.8 7.6 Q15.8 8.3 16.5 8.3 L23.6 8.3Z" fill="url(#fdg)"/><text x="11.6" y="20.3" text-anchor="middle" font-family="Liberation Sans" font-size="20.5" fill="#3a1589" stroke="#f3f3f3" stroke-width="0.35">c</text></svg>
<div class="fn sans" style="top:1163px;color:#3a3a3a;">src/regexpr.c</div>
<div class="cb cb1" style="top:1207px">
<svg width="28" height="28" viewBox="0 0 28 28" style="position:absolute;left:0;top:0"><path d="M6.5 14.3 L11.8 20.4 L21.2 7.1" fill="none" stroke="#fff" stroke-width="4.3" stroke-linecap="round" stroke-linejoin="round"/></svg>
</div>
<svg class="ic" style="left:80px;top:1206px" width="30" height="30" viewBox="0 0 30 30"><defs><linearGradient id="g80_1206" x1="0" y1="0" x2="0" y2="1"><stop offset="0" stop-color="#0aab72"/><stop offset="1" stop-color="#0e7a5f"/></linearGradient></defs><rect x="0" y="0" width="30" height="30" fill="url(#g80_1206)"/><circle cx="7.7" cy="15" r="2.4" fill="#fff"/><circle cx="15" cy="15" r="2.4" fill="#fff"/><circle cx="22.4" cy="15" r="2.4" fill="#fff"/></svg>
<svg class="fi" style="top:1206px" width="26" height="31" viewBox="-1 -1 26 31"><path d="M0.6 0.5 H15.8 L23.6 8.3 V26.6 Q23.6 28 22.2 28 H1.4 Q0 28 0 26.6 V1.1 Q0 0.5 0.6 0.5Z" fill="#9a9a9a" transform="translate(0,0.9)" filter="url(#blur05)" opacity="0.75"/>
<path d="M0.6 0.5 H15.8 L23.6 8.3 V26.6 Q23.6 28 22.2 28 H1.4 Q0 28 0 26.6 V1.1 Q0 0.5 0.6 0.5Z" fill="url(#fpg)"/>
<path d="M15.8 0.5 L15.8 7.6 Q15.8 8.3 16.5 8.3 L23.6 8.3Z" fill="#888" transform="translate(-0.6,0.6)" filter="url(#blur05)" opacity="0.8"/>
<path d="M15.8 0.5 L15.8 7.6 Q15.8 8.3 16.5 8.3 L23.6 8.3Z" fill="url(#fdg)"/><text x="11.8" y="21.8" text-anchor="middle" font-family="Liberation Sans" font-size="21.5" fill="#a0000f" stroke="#f3f3f3" stroke-width="0.3">h</text></svg>
<div class="fn sans" style="top:1203px;color:#3a3a3a;letter-spacing:-0.24px;">src/repo_template…</div>
<div class="cb cb2" style="top:1247px">
<div style="position:absolute;left:4.5px;top:11.3px;width:19px;height:5.4px;border-radius:3px;background:#fff"></div>
</div>
<svg class="ic" style="left:80px;top:1246px" width="30" height="30" viewBox="0 0 30 30"><defs><linearGradient id="g80_1246" x1="0" y1="0" x2="0" y2="1"><stop offset="0" stop-color="#0073cc"/><stop offset="1" stop-color="#003c99"/></linearGradient></defs><rect x="0" y="0" width="30" height="30" fill="url(#g80_1246)"/><rect x="12.8" y="5.5" width="4.4" height="13" fill="#fff"/><circle cx="15" cy="23.3" r="2.5" fill="#fff"/></svg>
<svg class="ic" style="left:120px;top:1246px" width="30" height="30" viewBox="0 0 30 30"><defs><linearGradient id="g120_1246" x1="0" y1="0" x2="0" y2="1"><stop offset="0" stop-color="#0073cc"/><stop offset="1" stop-color="#003c99"/></linearGradient></defs><circle cx="15" cy="15" r="15" fill="url(#g120_1246)"/><rect x="12.8" y="5.5" width="4.4" height="13" fill="#fff"/><circle cx="15" cy="23.3" r="2.5" fill="#fff"/></svg>
<svg class="fi" style="top:1246px" width="26" height="31" viewBox="-1 -1 26 31"><path d="M0.6 0.5 H15.8 L23.6 8.3 V26.6 Q23.6 28 22.2 28 H1.4 Q0 28 0 26.6 V1.1 Q0 0.5 0.6 0.5Z" fill="#9a9a9a" transform="translate(0,0.9)" filter="url(#blur05)" opacity="0.75"/>
<path d="M0.6 0.5 H15.8 L23.6 8.3 V26.6 Q23.6 28 22.2 28 H1.4 Q0 28 0 26.6 V1.1 Q0 0.5 0.6 0.5Z" fill="url(#fpg)"/>
<path d="M15.8 0.5 L15.8 7.6 Q15.8 8.3 16.5 8.3 L23.6 8.3Z" fill="#888" transform="translate(-0.6,0.6)" filter="url(#blur05)" opacity="0.8"/>
<path d="M15.8 0.5 L15.8 7.6 Q15.8 8.3 16.5 8.3 L23.6 8.3Z" fill="url(#fdg)"/><text x="11.6" y="20.3" text-anchor="middle" font-family="Liberation Sans" font-size="20.5" fill="#3a1589" stroke="#f3f3f3" stroke-width="0.35">c</text></svg>
<div class="fn sans" style="top:1243px;color:#3a3a3a;">src/revert.c</div>
<div class="cb cb0" style="top:1287px">
</div>
<svg class="ic" style="left:120px;top:1286px" width="30" height="30" viewBox="0 0 30 30"><defs><linearGradient id="g120_1286" x1="0" y1="0" x2="0" y2="1"><stop offset="0" stop-color="#ff0a0a"/><stop offset="1" stop-color="#d60000"/></linearGradient></defs><circle cx="15" cy="15" r="15" fill="url(#g120_1286)"/><g stroke="#fff" stroke-width="4.0"><line x1="8.1" y1="8.1" x2="21.9" y2="21.9"/><line x1="21.9" y1="8.1" x2="8.1" y2="21.9"/></g></svg>
<svg class="fi" style="top:1286px" width="26" height="31" viewBox="-1 -1 26 31"><path d="M0.6 0.5 H15.8 L23.6 8.3 V26.6 Q23.6 28 22.2 28 H1.4 Q0 28 0 26.6 V1.1 Q0 0.5 0.6 0.5Z" fill="#9a9a9a" transform="translate(0,0.9)" filter="url(#blur05)" opacity="0.75"/>
<path d="M0.6 0.5 H15.8 L23.6 8.3 V26.6 Q23.6 28 22.2 28 H1.4 Q0 28 0 26.6 V1.1 Q0 0.5 0.6 0.5Z" fill="url(#fpg)"/>
<path d="M15.8 0.5 L15.8 7.6 Q15.8 8.3 16.5 8.3 L23.6 8.3Z" fill="#888" transform="translate(-0.6,0.6)" filter="url(#blur05)" opacity="0.8"/>
<path d="M15.8 0.5 L15.8 7.6 Q15.8 8.3 16.5 8.3 L23.6 8.3Z" fill="url(#fdg)"/><text x="11.6" y="20.3" text-anchor="middle" font-family="Liberation Sans" font-size="20.5" fill="#3a1589" stroke="#f3f3f3" stroke-width="0.35">c</text></svg>
<div class="fn sans" style="top:1283px;color:#3a3a3a;">src/revwalk.c</div>
<svg class="a" style="left:552px;top:28px" width="100" height="126" viewBox="0 0 100 126">
<defs>
<linearGradient id="bigf" x1="1" y1="0" x2="0" y2="1"><stop offset="0" stop-color="#e8e8e8"/><stop offset="1" stop-color="#f8f8f8"/></linearGradient>
<linearGradient id="bigd" x1="0" y1="1" x2="1" y2="0"><stop offset="0" stop-color="#fdfdfd"/><stop offset="1" stop-color="#ececec"/></linearGradient>
<filter id="bb1" x="-30%" y="-30%" width="160%" height="160%"><feGaussianBlur stdDeviation="1"/></filter>
<filter id="bb2" x="-30%" y="-30%" width="160%" height="160%"><feGaussianBlur stdDeviation="2.2"/></filter>
<clipPath id="pgclip"><path d="M8.3 4.3 H59.2 L92.3 37.4 V115 Q92.3 118 89.3 118 H8.3 Q5.3 118 5.3 115 V7.3 Q5.3 4.3 8.3 4.3Z"/></clipPath>
</defs>
<path d="M8.3 4.3 H59.2 L92.3 37.4 V115 Q92.3 118 89.3 118 H8.3 Q5.3 118 5.3 115 V7.3 Q5.3 4.3 8.3 4.3Z" fill="#000" opacity="0.28" transform="translate(0,1.4)" filter="url(#bb1)"/>
<path d="M8.3 4.3 H59.2 L92.3 37.4 V115 Q92.3 118 89.3 118 H8.3 Q5.3 118 5.3 115 V7.3 Q5.3 4.3 8.3 4.3Z" fill="url(#bigf)"/>
<g clip-path="url(#pgclip)"><path d="M59.2 4.3 V33.4 Q59.2 36.4 62.2 36.4 H92.3Z" fill="#000" opacity="0.32" transform="translate(-0.8,1.6)" filter="url(#bb2)"/></g>
<path d="M59.2 4.3 V33.4 Q59.2 36.4 62.2 36.4 H92.3Z" fill="url(#bigd)"/>
<path d="M69.42 51.7 A21 23.85 0 1 0 69.42 70.4 L61.16 70.4 A13.2 17.15 0 1 1 61.16 51.7 Z" fill="#431a88"/>
</svg>
<div class="a sans" style="left:681px;top:50px;font-size:29.2px;font-weight:700;color:#222;line-height:40px">graph.c</div>
<div class="a sans" style="left:681px;top:93px;font-size:27.4px;color:#2a2a2a;line-height:40px;white-space:pre">3 hunks, 5 insertions, 5 deletions</div>
<div class="a" style="left:1952px;top:50px;width:219px;height:36px;border-radius:10px;background:#f0f0f0;box-shadow:inset 0 0 0 0.5px #e4e4e4"></div>
<div class="a" style="left:1952px;top:51px;width:121px;height:33.5px;border-radius:9px;background:#fff;box-shadow:0 0 0 0.6px rgba(0,0,0,.18),0 1px 1.5px rgba(0,0,0,.22)"></div>
<div class="a sans" style="left:1961px;top:48px;font-size:22.8px;letter-spacing:0.3px;color:#222;line-height:40px">Unstaged</div>
<div class="a sans" style="left:2086px;top:48px;font-size:22.6px;letter-spacing:0.3px;color:#222;line-height:40px">Staged</div>
<div class="a" style="left:513px;top:175px;width:1683px;height:1.5px;background:#e2e2e2"></div>
<div class="hh" style="top:175.5px"></div>
<div class="a mono hmono" style="left:552.5px;top:196px;line-height:36px;color:#222">@@ −39,8 +39,8 @@ static int mark_parents(git_revwalk <span class="ast">*</span>walk, git_commit_list_node <span class="ast">*</span>one,</div>
<div class="btng" style="top:191px"><div class="a" style="left:178px;top:0;width:2px;height:32px;background:#ababab"></div></div>
<div class="btnt sans" style="left:1843px;top:194px">Discard Hunk</div>
<div class="btnt sans" style="left:2025px;top:194px">Stage Hunk</div>
<div class="a" style="left:585.25px;top:245px;width:1.5px;height:331px;background:#e2e2e2"></div>
<div class="a" style="left:659.25px;top:245px;width:1.5px;height:331px;background:#e2e2e2"></div>
<div class="ln mono" style="left:513px;width:65px;top:255px">40</div>
<div class="ln mono" style="left:586px;width:66px;top:255px">40</div>
<div class="code mono" style="left:727px;top:255px">/<span class="ast">*</span> if the commit is repeated, we have a our merge base already <span class="ast">*</span>/</div>
<div class="ln mono" style="left:513px;width:65px;top:291px">41</div>
<div class="ln mono" style="left:586px;width:66px;top:291px">41</div>
<div class="code mono" style="left:727px;top:291px">if (one == two) {</div>
<div class="rowdel" style="left:660.75px;top:323px;width:1536px;height:36px"></div>
<div class="ln mono" style="left:513px;width:65px;top:327px">−42</div>
<div class="ln mono" style="left:586px;width:66px;top:327px"></div>
<div class="code mono" style="left:783px;top:327px">one−&gt;flags |= PARENT1 | PARENT2 | RESULT;</div>
<div class="rowdel" style="left:660.75px;top:359px;width:1536px;height:36px"></div>
<div class="hl" style="left:886.77px;top:359px;width:14.82px;height:36px;background:#f8b6b9"></div>
<div class="ln mono" style="left:513px;width:65px;top:363px">−43</div>
<div class="ln mono" style="left:586px;width:66px;top:363px"></div>
<div class="code mono" style="left:783px;top:363px">return 0;</div>
<div class="rowadd" style="left:660.75px;top:395px;width:1536px;height:36px"></div>
<div class="hl" style="left:1287.05px;top:395px;width:148.25px;height:36px;background:#9cf0a6"></div>
<div class="ln mono" style="left:513px;width:65px;top:399px"></div>
<div class="ln mono" style="left:586px;width:66px;top:399px">+42</div>
<div class="code mono" style="left:783px;top:399px">one−&gt;flags |= PARENT1 | PARENT2 | PARENT3 | RESULT;</div>
<div class="rowadd" style="left:660.75px;top:431px;width:1536px;height:36px"></div>
<div class="hl" style="left:886.77px;top:431px;width:29.65px;height:36px;background:#9cf0a6"></div>
<div class="ln mono" style="left:513px;width:65px;top:435px"></div>
<div class="ln mono" style="left:586px;width:66px;top:435px">+43</div>
<div class="code mono" style="left:783px;top:435px">return −1;</div>
<div class="ln mono" style="left:513px;width:65px;top:471px">44</div>
<div class="ln mono" style="left:586px;width:66px;top:471px">44</div>
<div class="code mono" style="left:727px;top:471px">}</div>
<div class="ln mono" style="left:513px;width:65px;top:507px">45</div>
<div class="ln mono" style="left:586px;width:66px;top:507px">45</div>
<div class="code mono" style="left:671px;top:507px"></div>
<div class="ln mono" style="left:513px;width:65px;top:543px">46</div>
<div class="ln mono" style="left:586px;width:66px;top:543px">46</div>
<div class="code mono" style="left:727px;top:543px">if (git_pqueue_init(&amp;list, 0, 2, git_commit_list_time_cmp) &lt; 0)</div>
<div class="a" style="left:660.75px;top:323px;width:1536px;height:2px;background:#fcc2c6"></div>
<div class="a" style="left:660.75px;top:395px;width:1536px;height:2px;background:#b4d9b9"></div>
<div class="a" style="left:660.75px;top:465px;width:1536px;height:2px;background:#b4d9b9"></div>
<div class="a" style="left:660.75px;top:467px;width:1536px;height:1px;background:#fff"></div>
<div class="hh" style="top:575.5px"></div>
<div class="a mono hmono" style="left:552.5px;top:596px;line-height:36px;color:#222">@@ −160,9 +160,9 @@ int git_graph_ahead_behind(size_t <span class="ast">*</span>ahead, size_t <span class="ast">*</span>behind, git_repo…</div>
<div class="btng" style="top:591px"><div class="a" style="left:178px;top:0;width:2px;height:32px;background:#ababab"></div></div>
<div class="btnt sans" style="left:1843px;top:594px">Discard Hunk</div>
<div class="btnt sans" style="left:2025px;top:594px">Stage Hunk</div>
<div class="a" style="left:599.25px;top:645px;width:1.5px;height:399px;background:#e2e2e2"></div>
<div class="a" style="left:687.25px;top:645px;width:1.5px;height:399px;background:#e2e2e2"></div>
<div class="ln mono" style="left:513px;width:80.2px;top:651px">160</div>
<div class="ln mono" style="left:600px;width:81.2px;top:651px">160</div>
<div class="code mono" style="left:755px;top:651px">if (commit_l == NULL)</div>
<div class="ln mono" style="left:513px;width:80.2px;top:687px">161</div>
<div class="ln mono" style="left:600px;width:81.2px;top:687px">161</div>
<div class="code mono" style="left:811px;top:687px">goto on_error;</div>
<div class="ln mono" style="left:513px;width:80.2px;top:723px">162</div>
<div class="ln mono" style="left:600px;width:81.2px;top:723px">162</div>
<div class="code mono" style="left:699px;top:723px"></div>
<div class="rowdel" style="left:688.75px;top:755px;width:1508px;height:36px"></div>
<div class="hl" style="left:1199.75px;top:755px;width:163.07px;height:36px;background:#f8b6b9"></div>
<div class="ln mono" style="left:513px;width:80.2px;top:759px">−163</div>
<div class="ln mono" style="left:600px;width:81.2px;top:759px"></div>
<div class="code mono" style="left:755px;top:759px">if (mark_parents(walk, commit_l, commit_u) &lt; 0)</div>
<div class="rowadd" style="left:688.75px;top:791px;width:1508px;height:36px"></div>
<div class="hl" style="left:1199.75px;top:791px;width:163.07px;height:36px;background:#9cf0a6"></div>
<div class="ln mono" style="left:513px;width:80.2px;top:795px"></div>
<div class="ln mono" style="left:600px;width:81.2px;top:795px">+163</div>
<div class="code mono" style="left:755px;top:795px">if (mark_parents(walk, commit_d, commit_v) &lt; 0)</div>
<div class="ln mono" style="left:513px;width:80.2px;top:831px">164</div>
<div class="ln mono" style="left:600px;width:81.2px;top:831px">164</div>
<div class="code mono" style="left:811px;top:831px">goto on_error;</div>
<div class="rowdel" style="left:688.75px;top:863px;width:1508px;height:36px"></div>
<div class="hl" style="left:1007.02px;top:863px;width:489.22px;height:36px;background:#f8b6b9"></div>
<div class="ln mono" style="left:513px;width:80.2px;top:867px">−165</div>
<div class="ln mono" style="left:600px;width:81.2px;top:867px"></div>
<div class="code mono" style="left:755px;top:867px">if (ahead_behind(commit_l, commit_u, ahead, behind) &lt; 0)</div>
<div class="rowadd" style="left:688.75px;top:899px;width:1508px;height:36px"></div>
<div class="hl" style="left:1007.02px;top:899px;width:489.22px;height:36px;background:#9cf0a6"></div>
<div class="ln mono" style="left:513px;width:80.2px;top:903px"></div>
<div class="ln mono" style="left:600px;width:81.2px;top:903px">+165</div>
<div class="code mono" style="left:755px;top:903px">if (ahead_behind(ahead, behind, commit_d, commit_v) &lt; 0)</div>
<div class="ln mono" style="left:513px;width:80.2px;top:939px">166</div>
<div class="ln mono" style="left:600px;width:81.2px;top:939px">166</div>
<div class="code mono" style="left:811px;top:939px">goto on_error;</div>
<div class="ln mono" style="left:513px;width:80.2px;top:975px">167</div>
<div class="ln mono" style="left:600px;width:81.2px;top:975px">167</div>
<div class="code mono" style="left:699px;top:975px"></div>
<div class="ln mono" style="left:513px;width:80.2px;top:1011px">168</div>
<div class="ln mono" style="left:600px;width:81.2px;top:1011px">168</div>
<div class="code mono" style="left:755px;top:1011px">git_revwalk_free(walk);</div>
<div class="a" style="left:688.75px;top:755px;width:1508px;height:2px;background:#fcc2c6"></div>
<div class="a" style="left:688.75px;top:791px;width:1508px;height:2px;background:#b4d9b9"></div>
<div class="a" style="left:688.75px;top:825px;width:1508px;height:2px;background:#b4d9b9"></div>
<div class="a" style="left:688.75px;top:827px;width:1508px;height:1px;background:#fff"></div>
<div class="a" style="left:688.75px;top:863px;width:1508px;height:2px;background:#fcc2c6"></div>
<div class="a" style="left:688.75px;top:899px;width:1508px;height:2px;background:#b4d9b9"></div>
<div class="a" style="left:688.75px;top:933px;width:1508px;height:2px;background:#b4d9b9"></div>
<div class="a" style="left:688.75px;top:935px;width:1508px;height:1px;background:#fff"></div>
<div class="hh" style="top:1043.5px"></div>
<div class="a mono hmono" style="left:552.5px;top:1064px;line-height:36px;color:#222">@@ −184,7 +184,7 @@ int git_graph_descendant_of(git_repository <span class="ast">*</span>repo, const git_oid <span class="ast">*</span>c…</div>
<div class="btng" style="top:1059px"><div class="a" style="left:178px;top:0;width:2px;height:32px;background:#ababab"></div></div>
<div class="btnt sans" style="left:1843px;top:1062px">Discard Hunk</div>
<div class="btnt sans" style="left:2025px;top:1062px">Stage Hunk</div>
<div class="a" style="left:599.25px;top:1113px;width:1.5px;height:219px;background:#e2e2e2"></div>
<div class="a" style="left:687.25px;top:1113px;width:1.5px;height:219px;background:#e2e2e2"></div>
<div class="ln mono" style="left:513px;width:80.2px;top:1119px">184</div>
<div class="ln mono" style="left:600px;width:81.2px;top:1119px">184</div>
<div class="code mono" style="left:699px;top:1119px"></div>
<div class="ln mono" style="left:513px;width:80.2px;top:1155px">185</div>
<div class="ln mono" style="left:600px;width:81.2px;top:1155px">185</div>
<div class="code mono" style="left:755px;top:1155px">error = git_merge_base(&amp;merge_base, repo, commit, ancestor);</div>
<div class="ln mono" style="left:513px;width:80.2px;top:1191px">186</div>
<div class="ln mono" style="left:600px;width:81.2px;top:1191px">186</div>
<div class="code mono" style="left:755px;top:1191px">/<span class="ast">*</span> No merge−base found, it&#x27;s not a descendant <span class="ast">*</span>/</div>
<div class="rowdel" style="left:688.75px;top:1223px;width:1508px;height:36px"></div>
<div class="hl" style="left:1021.85px;top:1223px;width:103.77px;height:36px;background:#f8b6b9"></div>
<div class="ln mono" style="left:513px;width:80.2px;top:1227px">−187</div>
<div class="ln mono" style="left:600px;width:81.2px;top:1227px"></div>
<div class="code mono" style="left:755px;top:1227px">if (error == GIT_ENOTFOUND)</div>
<div class="rowadd" style="left:688.75px;top:1259px;width:1508px;height:36px"></div>
<div class="hl" style="left:1021.85px;top:1259px;width:88.95px;height:36px;background:#9cf0a6"></div>
<div class="ln mono" style="left:513px;width:80.2px;top:1263px"></div>
<div class="ln mono" style="left:600px;width:81.2px;top:1263px">+187</div>
<div class="code mono" style="left:755px;top:1263px">if (error == GIT_EINVALID)</div>
<div class="ln mono" style="left:513px;width:80.2px;top:1299px">188</div>
<div class="ln mono" style="left:600px;width:81.2px;top:1299px">188</div>
<div class="code mono" style="left:811px;top:1299px">return 0;</div>
<div class="a" style="left:688.75px;top:1223px;width:1508px;height:2px;background:#fcc2c6"></div>
<div class="a" style="left:688.75px;top:1259px;width:1508px;height:2px;background:#b4d9b9"></div>
<div class="a" style="left:688.75px;top:1293px;width:1508px;height:2px;background:#b4d9b9"></div>
<div class="a" style="left:688.75px;top:1295px;width:1508px;height:1px;background:#fff"></div></div></div></body></html>
